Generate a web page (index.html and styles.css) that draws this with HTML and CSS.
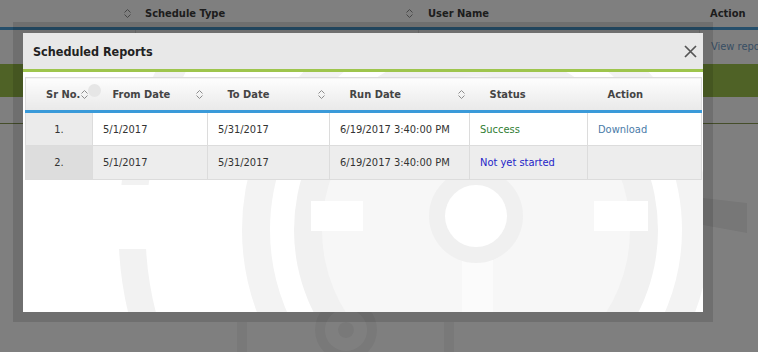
FILE: index.html
```html
<!DOCTYPE html>
<html lang="en">

<head>
    <meta charset="UTF-8">
    <meta name="viewport" content="width=device-width, initial-scale=1.0">
    <title>Scheduled Reports</title>
    <link rel="stylesheet" href="styles.css">
</head>

<body>
    <!-- page behind the dialog -->
    <div class="page">
        <svg class="page-mark" width="758" height="352" viewBox="0 0 758 352">
            <polygon points="703,198 747,203 747,233 703,225" fill="#eeeeee" />
            <rect x="237" y="322" width="10" height="30" fill="#f3f3f3" />
            <circle cx="346" cy="330" r="26" fill="none" stroke="#f3f3f3" stroke-width="10" />
            <circle cx="346" cy="330" r="8" fill="#f3f3f3" />
            <rect x="444" y="322" width="10" height="30" fill="#f3f3f3" />
        </svg>
        <div class="grid-head">
            <div class="gh-cell gh-first">
                <svg class="sort" width="7" height="9" viewBox="0 0 7 9"><path d="M0.5 3.5 3.5 0.5 6.5 3.5M0.5 5.5 3.5 8.5 6.5 5.5" /></svg>
            </div>
            <div class="gh-cell gh-type">
                <span>Schedule Type</span>
                <svg class="sort" width="7" height="9" viewBox="0 0 7 9"><path d="M0.5 3.5 3.5 0.5 6.5 3.5M0.5 5.5 3.5 8.5 6.5 5.5" /></svg>
            </div>
            <div class="gh-cell gh-user">User Name</div>
            <div class="gh-cell gh-action">Action</div>
        </div>
        <div class="grid-row">
            <div class="gr-cell gr-first"></div>
            <div class="gr-cell gr-type"></div>
            <div class="gr-cell gr-user"></div>
            <div class="gr-cell gr-action"><a href="#">View report</a></div>
        </div>
        <div class="grid-row green"></div>
        <div class="grid-row plain"></div>
    </div>

    <div class="overlay"></div>

    <!-- dialog -->
    <div class="modal-frame">
        <div class="modal">
            <div class="modal-head">
                <h2>Scheduled Reports</h2>
                <svg class="close" width="13" height="13" viewBox="0 0 13 13"><path d="M1 1 12 12M12 1 1 12" /></svg>
            </div>
            <div class="modal-body">
                <svg class="watermark" width="680" height="240" viewBox="23 72 680 240">
                    <circle cx="476" cy="230" r="344" fill="none" stroke="#f2f2f2" stroke-width="27" />
                    <rect x="23" y="185" width="140" height="64" fill="#fff" />
                    <circle cx="476" cy="230" r="220" fill="none" stroke="#f3f3f3" stroke-width="28" />
                    <circle cx="476" cy="230" r="182" fill="#f1f1f1" />
                    <circle cx="476" cy="230" r="154" fill="#f7f7f7" />
                    <rect x="311" y="201" width="52" height="30" fill="#fff" />
                    <rect x="594" y="201" width="54" height="30" fill="#fff" />
                    <rect x="462" y="250" width="31" height="70" fill="#fbfbfb" />
                    <circle cx="476" cy="216" r="47" fill="#f0f0f0" />
                    <circle cx="476" cy="216" r="31" fill="#fff" />
                </svg>
                <table class="reports">
                    <colgroup>
                        <col style="width: 67px">
                        <col style="width: 115px">
                        <col style="width: 122px">
                        <col style="width: 140px">
                        <col style="width: 118px">
                        <col style="width: 114px">
                    </colgroup>
                    <thead>
                        <tr>
                            <th><span>Sr No.</span><svg class="sort" width="7" height="9" viewBox="0 0 7 9"><path d="M0.5 3.5 3.5 0.5 6.5 3.5M0.5 5.5 3.5 8.5 6.5 5.5" /></svg></th>
                            <th><span class="touch"></span><span>From Date</span><svg class="sort" width="7" height="9" viewBox="0 0 7 9"><path d="M0.5 3.5 3.5 0.5 6.5 3.5M0.5 5.5 3.5 8.5 6.5 5.5" /></svg></th>
                            <th><span>To Date</span><svg class="sort" width="7" height="9" viewBox="0 0 7 9"><path d="M0.5 3.5 3.5 0.5 6.5 3.5M0.5 5.5 3.5 8.5 6.5 5.5" /></svg></th>
                            <th><span>Run Date</span><svg class="sort" width="7" height="9" viewBox="0 0 7 9"><path d="M0.5 3.5 3.5 0.5 6.5 3.5M0.5 5.5 3.5 8.5 6.5 5.5" /></svg></th>
                            <th><span>Status</span></th>
                            <th><span>Action</span></th>
                        </tr>
                    </thead>
                    <tbody>
                        <tr>
                            <td class="sr">1.</td>
                            <td>5/1/2017</td>
                            <td>5/31/2017</td>
                            <td>6/19/2017 3:40:00 PM</td>
                            <td class="success">Success</td>
                            <td><a href="#" class="download">Download</a></td>
                        </tr>
                        <tr class="alt">
                            <td class="sr">2.</td>
                            <td>5/1/2017</td>
                            <td>5/31/2017</td>
                            <td>6/19/2017 3:40:00 PM</td>
                            <td class="pending">Not yet started</td>
                            <td></td>
                        </tr>
                    </tbody>
                </table>
            </div>
        </div>
    </div>
</body>

</html>
```

FILE: styles.css
```css
:root {
    --green: #9ec54d;
    --blue-line: #3a9ad9;
    --border: #dcdcdc;
    --text: #333;
}

* {
    box-sizing: border-box;
    margin: 0;
    padding: 0;
}

body {
    width: 758px;
    height: 352px;
    overflow: hidden;
    font-family: "DejaVu Sans Condensed", "DejaVu Sans", "Liberation Sans", sans-serif;
    font-stretch: condensed;
    font-size: 11px;
    color: var(--text);
    background: #fff;
}

/* ---- page behind ---- */
.page {
    position: relative;
    height: 352px;
}

.page-mark {
    position: absolute;
    left: 0;
    top: 0;
}

.grid-head {
    position: relative;
    display: flex;
    height: 30px;
    border-bottom: 3px solid #4d9fd6;
    font-weight: bold;
    color: #3a3a3a;
}

.gh-cell,
.gr-cell {
    flex-shrink: 0;
}

.gh-cell {
    display: flex;
    align-items: center;
    height: 27px;
}

.gh-first {
    width: 136px;
    justify-content: flex-end;
    padding-right: 5px;
}

.gh-type {
    width: 283px;
    justify-content: space-between;
    padding: 0 6px 0 9px;
}

.gh-user {
    width: 281px;
    padding-left: 9px;
}

.gh-action {
    width: 58px;
    padding-left: 10px;
}

.grid-row {
    position: relative;
    display: flex;
    height: 34px;
}

.gr-cell {
    height: 100%;
    border-right: 1px solid #e4e4e4;
}

.gr-first {
    width: 136px;
}

.gr-type {
    width: 283px;
}

.gr-user {
    width: 281px;
}

.gr-action {
    width: 80px;
    border-right: none;
    padding: 10px 0 0 11px;
    white-space: nowrap;
}

.gr-action a {
    color: #6f9cc8;
    text-decoration: none;
    font-size: 11px;
}

.grid-row.green {
    height: 33px;
    background: var(--green);
}

.grid-row.plain {
    height: 27px;
    border-bottom: 1px solid #8a9c55;
}

.sort path {
    fill: none;
    stroke: #8c8c8c;
    stroke-width: 1;
}

.overlay {
    position: fixed;
    inset: 0;
    background: rgba(0, 0, 0, 0.5);
}

/* ---- dialog ---- */
.modal-frame {
    position: fixed;
    left: 13px;
    top: 22px;
    width: 700px;
    height: 300px;
    padding: 11px 10px 10px;
    background: rgba(0, 0, 0, 0.13);
}

.modal {
    display: flex;
    flex-direction: column;
    height: 100%;
    background: #fff;
}

.modal-head {
    display: flex;
    align-items: center;
    justify-content: space-between;
    height: 39px;
    padding: 0 6px 0 10px;
    background: #e8e8e8;
    border-bottom: 3px solid var(--green);
}

.modal-head h2 {
    font-size: 12.5px;
    font-weight: bold;
    color: #222;
}

.close path {
    fill: none;
    stroke: #555;
    stroke-width: 1.7;
}

.modal-body {
    position: relative;
    flex: 1;
    padding: 5px 2px 0;
    overflow: hidden;
}

.watermark {
    position: absolute;
    left: 0;
    top: 0;
}

.reports {
    position: relative;
    width: 676px;
    table-layout: fixed;
    border-collapse: collapse;
    border: 1px solid var(--border);
}

.reports th {
    position: relative;
    height: 34px;
    padding: 0 5px 0 20px;
    text-align: left;
    font-weight: bold;
    color: #444;
    background: linear-gradient(#fdfdfd, #e9e9e9);
    border-bottom: 3px solid var(--blue-line);
}

.reports th .sort {
    position: absolute;
    right: 5px;
    top: 12px;
}

.touch {
    position: absolute;
    left: -5px;
    top: 6px;
    width: 13px;
    height: 13px;
    border-radius: 50%;
    background: #e6e6e6;
}

.reports td {
    height: 34px;
    padding: 0 10px;
    border: 1px solid var(--border);
    background: #fff;
    white-space: nowrap;
}

.reports tr.alt td {
    background: #ededed;
}

.reports td.sr {
    text-align: center;
    background: #ebebeb;
}

.reports tr.alt td.sr {
    background: #dddddd;
}

.success {
    color: #2f7d32;
}

.pending {
    color: #2424c8;
}

.download {
    color: #4a7ba8;
    text-decoration: none;
}
```
